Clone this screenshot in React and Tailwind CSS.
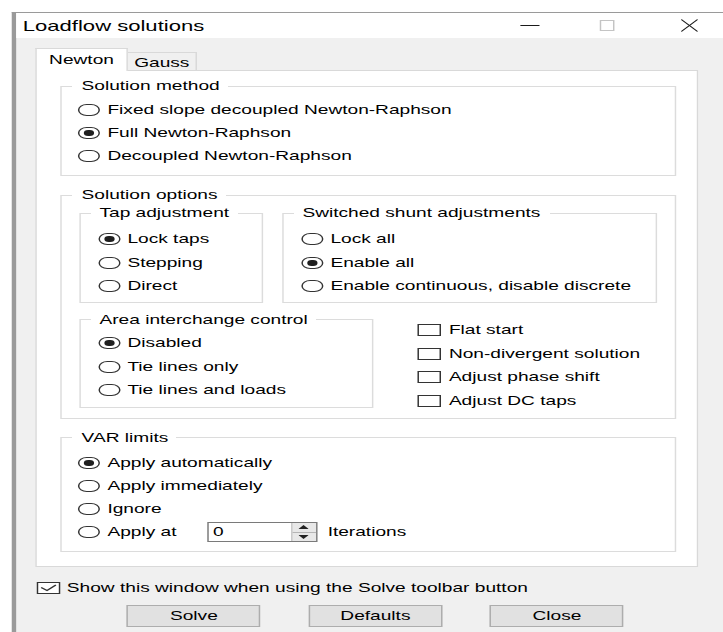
import React from "react";

// Scaled WinForms-style dialog: the inner frame is laid out at natural width,
// then stretched horizontally so glyphs and controls get the wide look.

function Radio({ checked }) {
  return (
    <span className="flex h-[12px] w-[15px] shrink-0 items-center justify-center rounded-full border border-[#333] bg-white">
      {checked && <span className="h-[6px] w-[7px] rounded-full bg-[#1f1f1f]" />}
    </span>
  );
}

function Check({ checked }) {
  return (
    <span className="flex h-[12px] w-[16px] shrink-0 items-center justify-center border border-[#333] bg-white">
      {checked && (
        <svg width="14" height="10" viewBox="0 0 14 10">
          <polyline points="2,4.5 6,7.5 12,2" fill="none" stroke="#333" strokeWidth="1.1" />
        </svg>
      )}
    </span>
  );
}

function RadioRow({ label, checked, rowClass }) {
  return (
    <div className={`flex items-center ${rowClass}`}>
      <Radio checked={checked} />
      <span className="ml-[5px] whitespace-nowrap">{label}</span>
    </div>
  );
}

function CheckRow({ label, checked }) {
  return (
    <div className="flex h-[23.5px] items-center">
      <Check checked={checked} />
      <span className="ml-[5px] whitespace-nowrap">{label}</span>
    </div>
  );
}

function Group({ title, className, children }) {
  return (
    <fieldset className={`border border-[#dcdcdc] ${className}`}>
      <legend className="ml-[7px] px-[6px] leading-[16px]">{title}</legend>
      {children}
    </fieldset>
  );
}

function Button({ children }) {
  return (
    <div className="flex h-[22px] w-[91px] items-center justify-center border border-[#adadad] bg-[#e1e1e1]">
      {children}
    </div>
  );
}

export default function App() {
  return (
    <div className="h-[632px] w-[723px] overflow-hidden bg-white font-['Liberation_Sans',Arial,sans-serif] text-[13px] leading-[16px] text-black">
      <div className="h-[632px] w-[492px] origin-top-left scale-x-[1.47] pt-[12px]">
        <div className="ml-[7.5px] h-[620px] w-[492.5px] border-l-[3px] border-t border-[#9a9a9a] bg-[#f0f0f0]">
          {/* title bar */}
          <div className="flex h-[25px] items-center bg-white">
            <span className="pl-[5px] text-[15px] leading-[18px]">Loadflow solutions</span>
            <div className="flex-1" />
            <div className="flex h-full w-[55px] items-center justify-center">
              <span className="h-px w-[13px] bg-[#1a1a1a]" />
            </div>
            <div className="flex h-full w-[50px] items-center justify-center">
              <span className="h-[11px] w-[10px] border border-[#c4c4c4]" />
            </div>
            <div className="flex h-full w-[62.5px] items-center justify-center">
              <svg width="12" height="13" viewBox="0 0 12 13">
                <line x1="0.5" y1="0.5" x2="11.5" y2="12.5" stroke="#1a1a1a" strokeWidth="1" />
                <line x1="11.5" y1="0.5" x2="0.5" y2="12.5" stroke="#1a1a1a" strokeWidth="1" />
              </svg>
            </div>
          </div>

          {/* body */}
          <div className="pl-[13.3px]">
            {/* tabs */}
            <div className="mt-[10px] flex h-[22px] items-end">
              <div className="relative z-10 mb-[-1px] flex h-[23px] w-[63.3px] items-center justify-center border border-b-0 border-[#d9d9d9] bg-white">
                Newton
              </div>
              <div className="flex h-[18px] w-[46.9px] items-center justify-center border-t border-r border-[#d9d9d9] bg-[#f0f0f0] pt-[2px]">
                Gauss
              </div>
            </div>

            {/* tab page */}
            <div className="w-[451.7px] border border-[#d9d9d9] bg-white pt-[7px] pr-[14px] pb-[14.5px] pl-[16.7px]">
              <Group title="Solution method" className="w-[419px]">
                <div className="pt-[4.5px] pb-[7px] pl-[10.6px]">
                  <RadioRow rowClass="h-[23px]" label="Fixed slope decoupled Newton-Raphson" />
                  <RadioRow rowClass="h-[23px]" label="Full Newton-Raphson" checked />
                  <RadioRow rowClass="h-[23px]" label="Decoupled Newton-Raphson" />
                </div>
              </Group>

              <Group title="Solution options" className="mt-[11.5px] w-[419px]">
                <div className="flex pt-[2px] pl-[11.2px]">
                  <Group title="Tap adjustment" className="w-[125.2px]">
                    <div className="pt-[6.5px] pb-[3.5px] pl-[12px]">
                      <RadioRow rowClass="h-[23.5px]" label="Lock taps" checked />
                      <RadioRow rowClass="h-[23.5px]" label="Stepping" />
                      <RadioRow rowClass="h-[23.5px]" label="Direct" />
                    </div>
                  </Group>
                  <Group title="Switched shunt adjustments" className="ml-[12.9px] w-[255.2px]">
                    <div className="pt-[6.5px] pb-[3.5px] pl-[12px]">
                      <RadioRow rowClass="h-[23.5px]" label="Lock all" />
                      <RadioRow rowClass="h-[23.5px]" label="Enable all" checked />
                      <RadioRow rowClass="h-[23.5px]" label="Enable continuous, disable discrete" />
                    </div>
                  </Group>
                </div>
                <div className="mt-[9px] flex pb-[5.5px] pl-[11.2px]">
                  <Group title="Area interchange control" className="w-[200px] self-start">
                    <div className="pt-[4px] pb-[4.5px] pl-[12px]">
                      <RadioRow rowClass="h-[23.5px]" label="Disabled" checked />
                      <RadioRow rowClass="h-[23.5px]" label="Tie lines only" />
                      <RadioRow rowClass="h-[23.5px]" label="Tie lines and loads" />
                    </div>
                  </Group>
                  <div className="mt-[7px] ml-[30.7px]">
                    <CheckRow label="Flat start" />
                    <CheckRow label="Non-divergent solution" />
                    <CheckRow label="Adjust phase shift" />
                    <CheckRow label="Adjust DC taps" />
                  </div>
                </div>
              </Group>

              <Group title="VAR limits" className="mt-[10.5px] w-[419px]">
                <div className="pt-[6px] pb-[7px] pl-[10.6px]">
                  <RadioRow rowClass="h-[23px]" label="Apply automatically" checked />
                  <RadioRow rowClass="h-[23px]" label="Apply immediately" />
                  <RadioRow rowClass="h-[23px]" label="Ignore" />
                  <div className="flex h-[23px] items-center">
                    <div className="flex w-[87.8px] items-center">
                      <Radio />
                      <span className="ml-[5px] whitespace-nowrap">Apply at</span>
                    </div>
                    <div className="flex h-[20px] w-[75px] border border-[#7a7a7a] bg-white">
                      <span className="flex-1 pl-[3px] leading-[18px]">0</span>
                      <div className="flex w-[17px] flex-col border-l border-[#c8c8c8] bg-[#e8e8e8]">
                        <div className="flex flex-1 items-center justify-center border-b border-[#b5b5b5]">
                          <svg width="7" height="4" viewBox="0 0 7 4">
                            <polygon points="0,4 3.5,0 7,4" fill="#222" />
                          </svg>
                        </div>
                        <div className="flex flex-1 items-center justify-center">
                          <svg width="7" height="4" viewBox="0 0 7 4">
                            <polygon points="0,0 7,0 3.5,4" fill="#222" />
                          </svg>
                        </div>
                      </div>
                    </div>
                    <span className="ml-[7px]">Iterations</span>
                  </div>
                </div>
              </Group>
            </div>

            {/* footer */}
            <div className="mt-[12.5px] ml-[1.4px] flex h-[16px] items-center">
              <Check checked />
              <span className="ml-[4.3px] whitespace-nowrap">Show this window when using the Solve toolbar button</span>
            </div>
            <div className="mt-[9px] flex gap-[32.5px] pl-[62.6px]">
              <Button>Solve</Button>
              <Button>Defaults</Button>
              <Button>Close</Button>
            </div>
          </div>
        </div>
      </div>
    </div>
  );
}
